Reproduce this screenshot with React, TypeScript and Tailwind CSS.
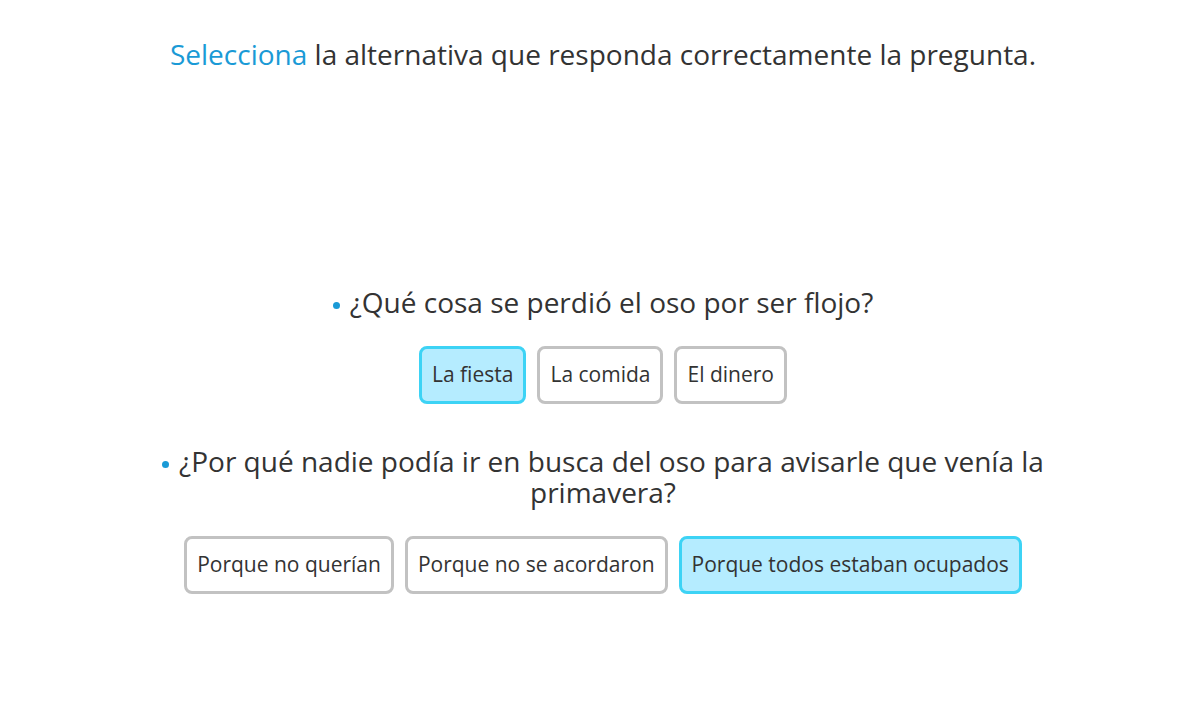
const questions = [
  {
    text: '¿Qué cosa se perdió el oso por ser flojo?',
    options: ['La fiesta', 'La comida', 'El dinero'],
    selected: 0,
  },
  {
    text: '¿Por qué nadie podía ir en busca del oso para avisarle que venía la primavera?',
    options: ['Porque no querían', 'Porque no se acordaron', 'Porque todos estaban ocupados'],
    selected: 2,
  },
];

export default function App() {
  return (
    <div
      className="min-h-[718px] w-full bg-white pl-[29px] text-[#333333]"
      style={{ fontFamily: '"Segoe UI", "Open Sans", "Noto Sans", sans-serif' }}
    >
      <h1 className="pt-[36px] text-center text-[28px] leading-[36px]">
        <span className="text-[#1a9ad6]">Selecciona</span> la alternativa que responda correctamente la pregunta.
      </h1>
      <div className="mx-auto mt-[215px] flex w-[900px] flex-col gap-[42px]">
        {questions.map((q, i) => (
          <div key={i} className="flex flex-col items-center gap-[28px]">
            <p className="text-center text-[28px] leading-[31px]">
              <span className="mr-[10px] inline-block h-[7px] w-[7px] rounded-full bg-[#1a9ad6] align-middle" />
              {q.text}
            </p>
            <div className="flex justify-center gap-[11px]">
              {q.options.map((opt, j) => (
                <button
                  key={j}
                  className={
                    j === q.selected
                      ? 'h-[58px] rounded-[8px] border-[3px] border-[#3dd3f5] bg-[#b5ecff] px-[10px] text-[21px] text-[#333333]'
                      : 'h-[58px] rounded-[8px] border-[3px] border-[#c2c2c2] bg-white px-[10px] text-[21px] text-[#333333]'
                  }
                >
                  {opt}
                </button>
              ))}
            </div>
          </div>
        ))}
      </div>
    </div>
  );
}
